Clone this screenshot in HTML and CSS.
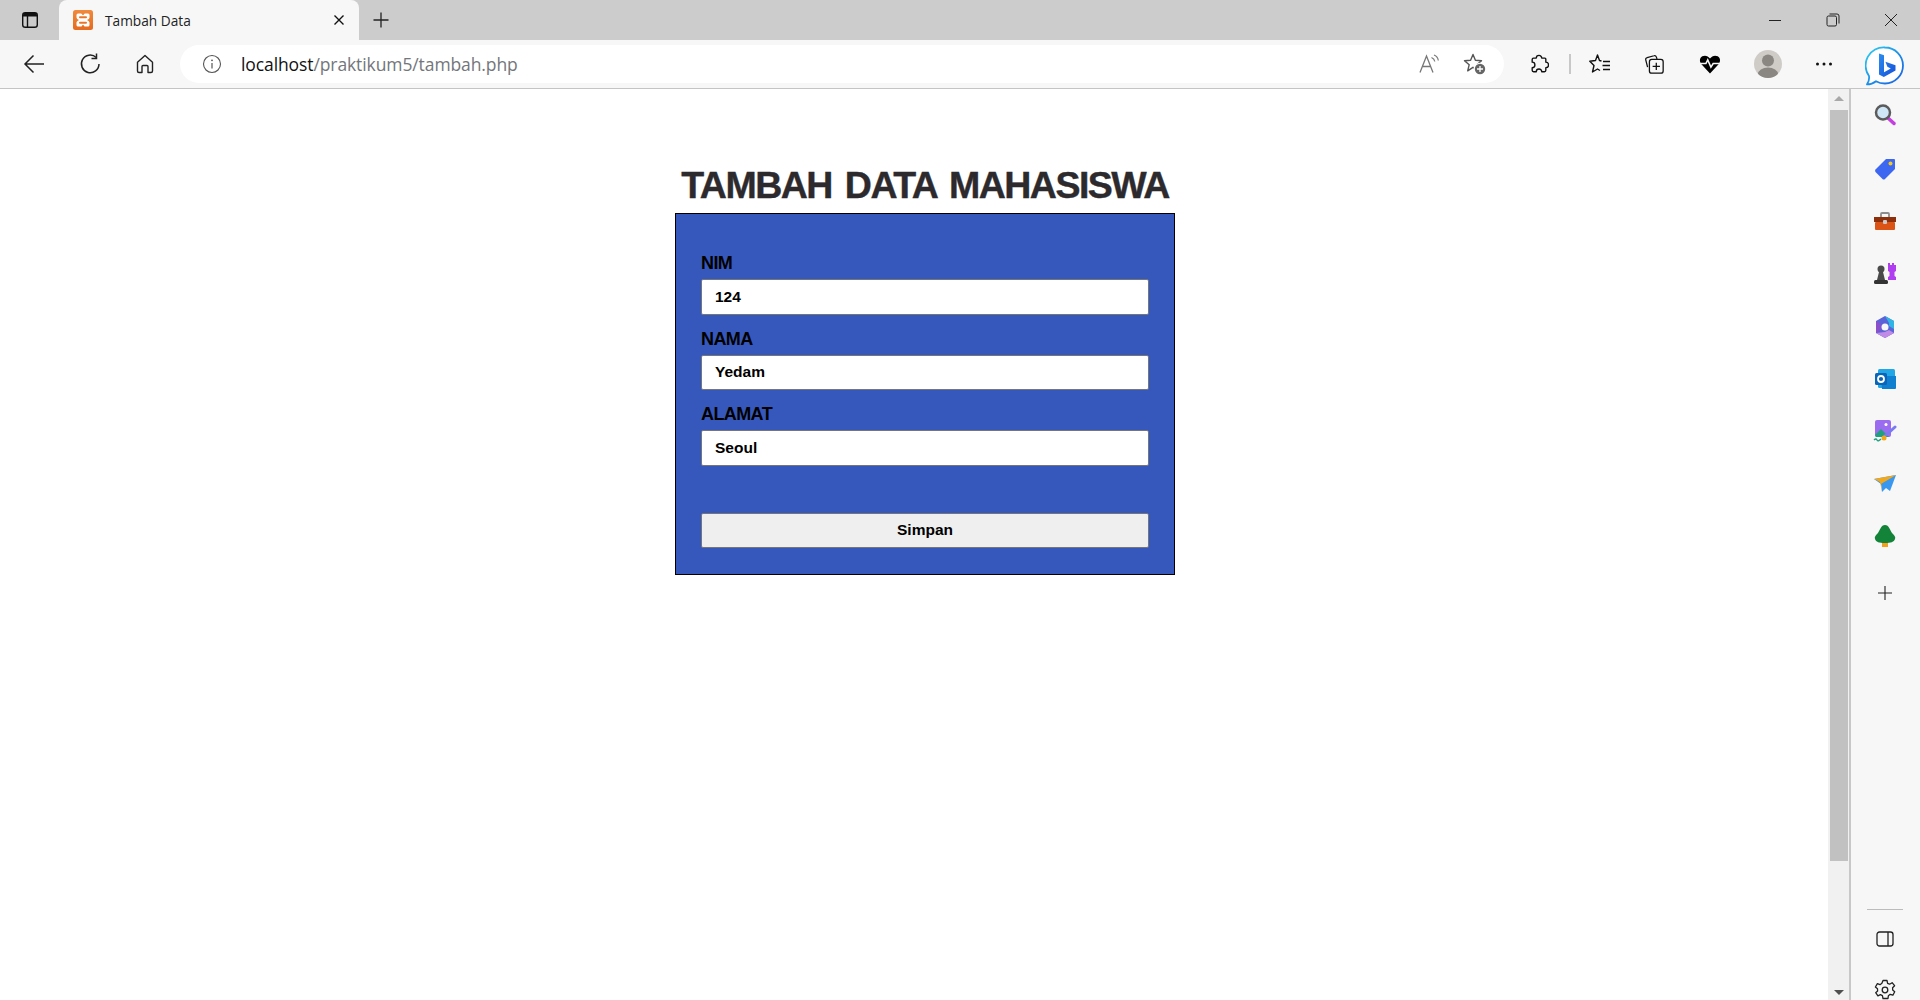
FILE: index.html
```html
<!DOCTYPE html>
<html lang="id">
<head>
<meta charset="utf-8">
<title>Tambah Data</title>
<link rel="stylesheet" href="styles.css">
</head>
<body>
<header class="tabstrip">
  <button class="tb tabs-btn" aria-label="Tabs">
    <svg width="20" height="20" viewBox="0 0 20 20"><rect x="2.700" y="2.700" width="14.600" height="14.600" rx="2.600" fill="none" stroke="#111" stroke-width="1.400"/><path d="M3 6.500V5a2.300 2.300 0 0 1 2.300-2.300h9.400A2.300 2.300 0 0 1 17 5v1.500z" fill="#111"/><path d="M7.500 6v11" stroke="#111" stroke-width="1.400"/></svg>
  </button>
  <div class="tab">
    <svg class="favicon" width="20" height="20" viewBox="0 0 20 20"><defs><linearGradient id="fo" x1="0" y1="0" x2="0" y2="1"><stop offset="0" stop-color="#f08a3c"/><stop offset="1" stop-color="#e56a1e"/></linearGradient></defs><rect width="20" height="20" rx="2.500" fill="url(#fo)"/><path d="M5 3.500h3q1 0 1.500 1.500h1Q11 3.500 12 3.500h3q1.500 0 1.500 1.500v2.500q0 1.500-2.500 2.500q2.500 1 2.500 2.500V15q0 1.500-1.500 1.500h-3q-1 0-1.500-1.500h-1Q9 16.500 8 16.500H5q-1.500 0-1.500-1.500v-2.500q0-1.500 2.500-2.500Q3.500 9 3.500 7.500V5Q3.500 3.500 5 3.500z" fill="#fff"/><rect x="6" y="6.200" width="8" height="2" rx="1" fill="#e9752a"/><rect x="6" y="11.800" width="8" height="2" rx="1" fill="#e9752a"/></svg>
    <span class="tab-title">Tambah Data</span>
    <svg class="tab-close" width="12" height="12" viewBox="0 0 12 12"><path d="M1.500 1.500l9 9M10.500 1.500l-9 9" stroke="#111" stroke-width="1.400"/></svg>
  </div>
  <svg class="newtab" width="18" height="18" viewBox="0 0 18 18"><path d="M9 1.500v15M1.500 9h15" stroke="#222" stroke-width="1.300"/></svg>
  <div class="winctl">
    <svg width="14" height="14" viewBox="0 0 14 14"><path d="M1 7.500h12" stroke="#222" stroke-width="1"/></svg>
    <svg width="14" height="14" viewBox="0 0 14 14"><rect x="1" y="3" width="9.500" height="10" rx="1.500" fill="none" stroke="#222"/><path d="M3.500 1h7.500A2 2 0 0 1 13 3v7.500" fill="none" stroke="#222"/></svg>
    <svg width="14" height="14" viewBox="0 0 14 14"><path d="M1 1l12 12M13 1L1 13" stroke="#222" stroke-width="1"/></svg>
  </div>
</header>

<nav class="toolbar">
  <div class="navbtns">
    <svg width="22" height="22" viewBox="0 0 22 22"><path d="M21 11H2M10.500 2.500L2 11l8.500 8.500" fill="none" stroke="#222" stroke-width="1.500"/></svg>
    <svg width="22" height="22" viewBox="0 0 22 22"><path d="M17.200 4.500A8.800 8.800 0 1 0 20 11" fill="none" stroke="#222" stroke-width="1.500"/><path d="M17.500 0.500v5h-5" fill="none" stroke="#222" stroke-width="1.500"/></svg>
    <svg width="20" height="22" viewBox="0 0 20 22"><path d="M10 2.500l7.500 6.800V18a1.500 1.500 0 0 1-1.500 1.500h-3V13.500a1 1 0 0 0-1-1H8a1 1 0 0 0-1 1v6H4A1.500 1.500 0 0 1 2.500 18V9.300z" fill="none" stroke="#222" stroke-width="1.400" stroke-linejoin="round"/></svg>
  </div>
  <div class="addr">
    <svg class="info" width="20" height="20" viewBox="0 0 20 20"><circle cx="10" cy="10" r="8.500" fill="none" stroke="#555" stroke-width="1.100"/><path d="M10 9v5.500" stroke="#555" stroke-width="1.200"/><circle cx="10" cy="6.300" r=".9" fill="#555"/></svg>
    <span class="url"><span class="host">localhost</span>/praktikum5/tambah.php</span>
    <svg class="readaloud" width="22" height="20" viewBox="0 0 22 20"><path d="M1 18.500L7.500 2 14 18.500M3.500 12.500h8" fill="none" stroke="#777" stroke-width="1.300"/><path d="M12.500 3.500c2 .8 3 2 3.300 4M15 1c2.500 1 4 3 4.300 5.500" fill="none" stroke="#777" stroke-width="1.200"/></svg>
    <svg class="addfav" width="24" height="24" viewBox="0 0 24 24"><path d="M10 2.500l2.400 5.800 6.100.4-4.700 4 1.500 5.600-5.300-3-5.300 3.500 1.500-6.100-4.700-4 6.100-.4z" fill="none" stroke="#555" stroke-width="1.400" stroke-linejoin="round"/><circle cx="17" cy="17" r="6.300" fill="#fff"/><circle cx="17" cy="17" r="5.200" fill="#666"/><path d="M17 14v6M14 17h6" stroke="#fff" stroke-width="1.300"/></svg>
  </div>
  <div class="tools">
    <svg class="t-ext" width="20" height="20" viewBox="0 0 22 22"><path d="M8 4.500a3 3 0 0 1 6 0h3.500a1 1 0 0 1 1 1V9a3 3 0 0 1 0 6v3a1.500 1.500 0 0 1-1.500 1.500h-3a3 3 0 0 0-6 0H5A1.500 1.500 0 0 1 3.500 18v-3a3 3 0 0 0 0-6V6A1.500 1.500 0 0 1 5 4.500z" fill="none" stroke="#111" stroke-width="1.500" stroke-linejoin="round"/></svg>
    <span class="sep"></span>
    <svg class="t-fav" width="22" height="22" viewBox="0 0 22 22"><path d="M12.500 8L10.500 7.500 8.500 2 6.500 7.500.8 8.300 5 12.500 3.500 19 8.500 16l2.500 1.500" fill="none" stroke="#111" stroke-width="1.400" stroke-linejoin="round"/><path d="M14 8.500h7M13.500 12.500h7.500M14 16.500h7" stroke="#111" stroke-width="1.300"/></svg>
    <svg class="t-col" width="22" height="22" viewBox="0 0 24 24"><path d="M5 15.500L3 7.500a2 2 0 0 1 1.500-2.500l7.500-2a2 2 0 0 1 2.500 1.200l.8 2.300" fill="none" stroke="#111" stroke-width="1.400"/><rect x="7" y="7" width="15" height="15" rx="2.500" fill="#f7f7f7" stroke="#111" stroke-width="1.400"/><path d="M14.500 10.500v8M10.500 14.500h8" stroke="#111" stroke-width="1.400"/></svg>
    <svg class="t-heart" width="22" height="20" viewBox="0 0 24 22"><path d="M12 21.500L2.800 11.500C0 8.500.5 4 3.500 2.500 6.500 1 10 2 12 5c2-3 5.500-4 8.500-2.500 3 1.500 3.500 6 .7 9z" fill="#000"/><path d="M0 10.500h7.500l2-4 3.500 8 2.500-4H24" fill="none" stroke="#f7f7f7" stroke-width="1.700"/></svg>
    <span class="avatar"><svg width="28" height="28" viewBox="0 0 28 28"><circle cx="14" cy="10.500" r="6" fill="#8a8782"/><ellipse cx="14" cy="24" rx="10" ry="6.500" fill="#8a8782"/></svg></span>
    <svg class="t-more" width="18" height="6" viewBox="0 0 18 6"><circle cx="2.500" cy="3" r="1.500" fill="#111"/><circle cx="9" cy="3" r="1.500" fill="#111"/><circle cx="15.500" cy="3" r="1.500" fill="#111"/></svg>
    <svg class="t-bing" width="40" height="40" viewBox="0 0 40 40"><defs><linearGradient id="br" x1="0" y1="0" x2="1" y2="1"><stop offset="0" stop-color="#2fd0f0"/><stop offset=".6" stop-color="#1a86e8"/><stop offset="1" stop-color="#1f5fe0"/></linearGradient><linearGradient id="bb" x1="0" y1="0" x2="1" y2="1"><stop offset="0" stop-color="#2a8ef0"/><stop offset="1" stop-color="#1650d8"/></linearGradient></defs><path d="M20 1.500a18 18 0 0 1 0 36c-3.500 0-6.500-.8-9-2.300-2.500 2-5.500 3.200-9 3.200 1.800-2.500 2.400-5.500 2-8.400A18 18 0 0 1 20 1.500z" fill="#fff" stroke="url(#br)" stroke-width="1.800" stroke-linejoin="round"/><path d="M14 7.500l5 1.700v17l6.800-3.800-3.400-1.600-2-5 10.100 3.500v5.200l-11.700 6.500L14 28.500z" fill="url(#bb)"/></svg>
  </div>
</nav>

<div class="body">
  <main class="page">
    <h1 class="title">TAMBAH DATA MAHASISWA</h1>
    <form class="card">
      <label class="lbl" for="nim">NIM</label>
      <input class="field" id="nim" type="text" value="124">
      <label class="lbl" for="nama">NAMA</label>
      <input class="field" id="nama" type="text" value="Yedam">
      <label class="lbl" for="alamat">ALAMAT</label>
      <input class="field" id="alamat" type="text" value="Seoul">
      <button class="save" type="button">Simpan</button>
    </form>
  </main>
  <div class="scroll">
    <svg class="arrow" width="12" height="7" viewBox="0 0 12 7"><path d="M6 1l5 5H1z" fill="#a8a8a8"/></svg>
    <div class="thumb"></div>
    <svg class="arrow-d" width="12" height="7" viewBox="0 0 12 7"><path d="M1 1h10L6 6z" fill="#505050"/></svg>
  </div>
  <aside class="side">
    <svg class="first" width="24" height="24" viewBox="0 0 24 24"><path d="M15 15l6 5.500" stroke="#c43ee0" stroke-width="3.500" stroke-linecap="round"/><circle cx="10" cy="9.500" r="7" fill="#cfe6f7" stroke="#5b5b5b" stroke-width="2.500"/></svg>
    <svg width="24" height="24" viewBox="0 0 24 24"><path d="M13 2h8a1 1 0 0 1 1 1v9L12 22a2 2 0 0 1-2.500 0L2.500 15a2 2 0 0 1 0-2.500z" fill="#3d67f0"/><circle cx="17.500" cy="6.500" r="2" fill="#f6c91f"/></svg>
    <svg width="24" height="22" viewBox="0 0 24 22"><path d="M8 6V3a1 1 0 0 1 1-1h6a1 1 0 0 1 1 1v3" fill="none" stroke="#8d8d8d" stroke-width="1.800"/><rect x="1" y="6" width="22" height="5" fill="#8e2f0c"/><rect x="2" y="11" width="20" height="8" rx="1" fill="#dc5316"/><rect x="10" y="9" width="4" height="4" rx="1" fill="#c9c9c9"/></svg>
    <svg width="24" height="24" viewBox="0 0 24 24"><path d="M15 1h2v2h2V1h2v2h2v6l-1.500 1v4l1.500 1v3H15v-3l1.500-1v-4L15 9z" fill="#b13df0"/><circle cx="8" cy="7" r="3.500" fill="#4a4a4a"/><path d="M6 10h4l2 8H4z" fill="#4a4a4a"/><rect x="1" y="18" width="14" height="4" rx="1.500" fill="#333"/></svg>
    <svg width="22" height="24" viewBox="0 0 22 24"><path d="M11 1l9 5v12l-9 5-9-5V6z" fill="#5a63d8"/><path d="M11 1l9 5v8l-5-3V8z" fill="#2fb5e4"/><path d="M2 18l9 5 9-5-5-3-4 2z" fill="#c18ae6"/><path d="M2 6l5 3v6l-5 3z" fill="#8a4fc9"/><circle cx="11" cy="12" r="3.500" fill="#f7f7f7"/></svg>
    <svg width="22" height="22" viewBox="0 0 22 22"><rect x="4" y="1" width="17" height="19" rx="1.500" fill="#21a6e6"/><path d="M7 8h15v12a1 1 0 0 1-1 1H8z" fill="#0f7fd0"/><rect x="1" y="5" width="12" height="12" rx="1.500" fill="#0a64b8"/><circle cx="7" cy="11" r="3" fill="none" stroke="#fff" stroke-width="1.800"/></svg>
    <svg width="24" height="24" viewBox="0 0 24 24"><rect x="2" y="1" width="16" height="17" rx="2" fill="#9c6cf0"/><path d="M2 16l6-6 8 8H3z" fill="#1fa080"/><circle cx="13" cy="5.500" r="1.500" fill="#fff"/><path d="M22 8L11 18" stroke="#7a7af0" stroke-width="3" stroke-linecap="round"/><circle cx="11" cy="19" r="2.500" fill="#f2a81d"/><path d="M1 21q2-2 3 0t4-1" fill="none" stroke="#1fa080" stroke-width="1.300"/></svg>
    <svg width="24" height="20" viewBox="0 0 24 20"><path d="M1 5l22-4-6 16-4-3-4 4-1-8z" fill="#3a97f0"/><path d="M1 5l22-4L8 10l1 8-2-10z" fill="#f2a81d"/></svg>
    <svg width="22" height="24" viewBox="0 0 22 24"><rect x="8" y="17" width="6" height="6" fill="#f2a01d"/><path d="M11 1c4 0 5 5 7 8 2 2 4 4 3 6-1 3-4 4-10 4S2 18 1 15c-1-2 1-4 3-6 2-3 3-8 7-8z" fill="#128338"/></svg>
    <svg class="plus" width="16" height="16" viewBox="0 0 16 16"><path d="M8 1v14M1 8h14" stroke="#222" stroke-width="1.100"/></svg>
    <span class="side-line"></span>
    <svg class="panel" width="18" height="16" viewBox="0 0 18 16"><rect x="1" y="1" width="16" height="14" rx="2.500" fill="none" stroke="#222" stroke-width="1.300"/><path d="M12 1v14" stroke="#222" stroke-width="1.300"/></svg>
    <svg class="gear" width="22" height="22" viewBox="0 0 22 22"><path d="M9 1.500h4l.6 2.800 2 .9 2.500-1.500 2.500 3-2 2 .1 2.400 2 1.600-1.800 3.500-2.700-.9-1.800 1.400-.4 2.800H9l-.6-2.800-2-1-2.500 1.200-2.200-3.200L3.600 12l-.1-2.200L1.400 8l2-3.300 2.600 1 1.900-1.400z" fill="none" stroke="#222" stroke-width="1.300" stroke-linejoin="round"/><circle cx="11" cy="11" r="2.800" fill="none" stroke="#222" stroke-width="1.300"/></svg>
  </aside>
</div>
</body>
</html>
```

FILE: styles.css
```css
* { box-sizing: border-box; }
html, body { margin: 0; height: 1000px; overflow: hidden; background: #fff; }
body { display: flex; flex-direction: column; font-family: "Open Sans", "Noto Sans", sans-serif; color: #111; }
svg { display: block; flex: none; }

.tabstrip { height: 40px; flex: none; background: #cccccc; display: flex; align-items: center; }
.tb { border: 0; background: none; padding: 0; margin-left: 20px; width: 20px; height: 20px; }
.tab { width: 300px; height: 40px; margin-left: 19px; background: #f7f7f7; border-radius: 8px 8px 0 0; display: flex; align-items: center; padding: 0 14px; }
.favicon { margin-right: 12px; }
.tab-title { font-size: 13.700px; color: #222; flex: 1; font-family: "Open Sans", sans-serif; }
.newtab { margin-left: 13px; }
.winctl { margin-left: auto; display: flex; gap: 44px; padding-right: 22px; }
.winctl svg { width: 14px; height: 14px; }

.toolbar { height: 49px; flex: none; background: #f7f7f7; border-bottom: 1px solid #c4c4c4; display: flex; align-items: center; padding-bottom: 1px; }
.navbtns { display: flex; align-items: center; gap: 34px; padding-left: 23px; width: 180px; }
.addr { width: 1324px; height: 38px; border-radius: 19px; background: #fff; display: flex; align-items: center; padding-left: 22px; }
.url { font-size: 17.500px; margin-left: 19px; color: #73767a; flex: 1; font-family: "Open Sans", sans-serif; letter-spacing: -.1px; }
.host { color: #111; }
.readaloud { margin-right: 22px; }
.addfav { margin-right: 17px; }
.tools { flex: 1; display: flex; align-items: center; padding-left: 25px; position: relative; }
.sep { width: 2px; height: 20px; background: #c8c8c8; margin: 0 18px 0 20px; }
.t-fav { margin-right: 32px; }
.t-col { margin-right: 34px; }
.t-heart { margin-right: 33px; }
.avatar { width: 28px; height: 28px; border-radius: 50%; background: #cfccc8; overflow: hidden; margin-right: 33px; }
.t-bing { position: absolute; left: 361px; top: -4px; }

.body { flex: 1; min-height: 0; display: flex; }
.page { flex: 1; min-width: 0; display: flex; flex-direction: column; align-items: center; padding: 70px 0 0 22px; }
.title { margin: 0 0 2px; font: 700 37.500px/52px "Liberation Sans", Arial, sans-serif; color: #2d2a2e; letter-spacing: -1.500px; word-spacing: 4px; -webkit-text-stroke: .4px #2d2a2e; }
.card { width: 500px; height: 362px; background: #3658bc; border: 1px solid #000; padding-top: 25px; padding-left: 25px; display: flex; flex-direction: column; }
.lbl { font: 700 18px/22px "Liberation Sans", Arial, sans-serif; color: #000; height: 40px; padding-top: 13px; letter-spacing: -.6px; flex: none; }
.field { width: 448px; height: 35.500px; flex: none; border: 1px solid #767676; border-radius: 2px; background: #fff; padding: 0 13px; font: 700 15.500px "Liberation Sans", Arial, sans-serif; color: #000; }
.save { width: 448px; height: 35.500px; flex: none; margin-top: 47px; border: 1px solid #767676; border-radius: 2px; background: #efefef; font: 700 15.500px "Liberation Sans", Arial, sans-serif; color: #000; }

.scroll { width: 21px; flex: none; background: #f1f1f1; display: flex; flex-direction: column; align-items: center; padding: 3px 1px 0 2px; }
.arrow { margin: 3px 0 8px; }
.thumb { width: 18px; height: 751px; background: #c1c1c1; flex: none; }
.arrow-d { margin-top: auto; margin-bottom: 4px; }

.side { width: 71px; flex: none; background: #f7f7f7; border-left: 2px solid #c8c8c8; display: flex; flex-direction: column; align-items: center; padding: 14px 2px 0 0; gap: 28.400px; overflow: hidden; }
.side svg { height: 24px; }
.side .first { margin-bottom: 2px; }
.side .plus { height: 16px; margin-top: 8.500px; }
.side-line { width: 36px; height: 1px; background: #bcbcbc; margin-top: 280px; flex: none; }
.side .panel { height: 16px; margin-top: -8px; }
.side .gear { height: 22px; margin-top: 4px; }
```
